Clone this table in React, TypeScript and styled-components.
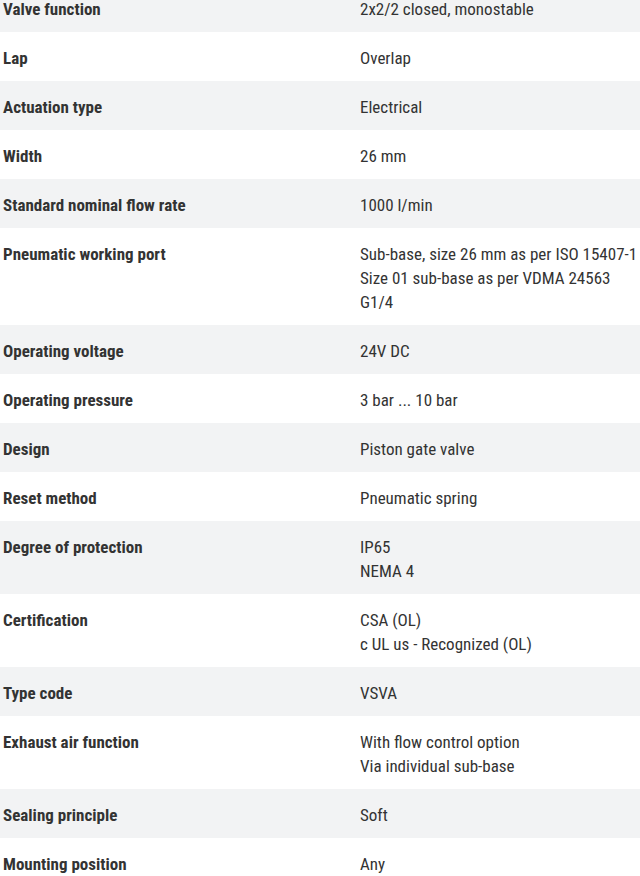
import React from "react";
import styled, { createGlobalStyle } from "styled-components";

const GlobalStyle = createGlobalStyle`
  html, body { margin: 0; padding: 0; background: #ffffff; }
  body { font-family: "Roboto Condensed", "Liberation Sans", sans-serif; color: #333333; overflow: hidden; }
`;

type Spec = { label: string; values: string[] };

const specs: Spec[] = [
  { label: "Valve function", values: ["2x2/2 closed, monostable"] },
  { label: "Lap", values: ["Overlap"] },
  { label: "Actuation type", values: ["Electrical"] },
  { label: "Width", values: ["26 mm"] },
  { label: "Standard nominal flow rate", values: ["1000 l/min"] },
  {
    label: "Pneumatic working port",
    values: ["Sub-base, size 26 mm as per ISO 15407-1", "Size 01 sub-base as per VDMA 24563", "G1/4"],
  },
  { label: "Operating voltage", values: ["24V DC"] },
  { label: "Operating pressure", values: ["3 bar ... 10 bar"] },
  { label: "Design", values: ["Piston gate valve"] },
  { label: "Reset method", values: ["Pneumatic spring"] },
  { label: "Degree of protection", values: ["IP65", "NEMA 4"] },
  { label: "Certification", values: ["CSA (OL)", "c UL us - Recognized (OL)"] },
  { label: "Type code", values: ["VSVA"] },
  { label: "Exhaust air function", values: ["With flow control option", "Via individual sub-base"] },
  { label: "Sealing principle", values: ["Soft"] },
  { label: "Mounting position", values: ["Any"] },
];

const Table = styled.div`
  display: flex;
  flex-direction: column;
  width: 640px;
  margin-top: -17px;
`;

const Row = styled.div<{ $shaded: boolean }>`
  display: grid;
  grid-template-columns: 357px 1fr;
  padding: 14px 0 11px;
  background: ${(p) => (p.$shaded ? "#f2f3f4" : "#ffffff")};
  font-size: 17px;
  line-height: 24px;
`;

const Label = styled.div`
  padding-left: 3px;
  font-weight: 700;
  color: #333333;
`;

const Values = styled.div`
  padding-left: 3px;
  display: flex;
  flex-direction: column;
  font-weight: 400;
  color: #333333;
  white-space: nowrap;
`;

const Value = styled.span`
  display: block;
`;

export default function App() {
  return (
    <>
      <GlobalStyle />
      <Table>
        {specs.map((s, i) => (
          <Row key={s.label} $shaded={i % 2 === 0}>
            <Label>{s.label}</Label>
            <Values>
              {s.values.map((v) => (
                <Value key={v}>{v}</Value>
              ))}
            </Values>
          </Row>
        ))}
      </Table>
    </>
  );
}
